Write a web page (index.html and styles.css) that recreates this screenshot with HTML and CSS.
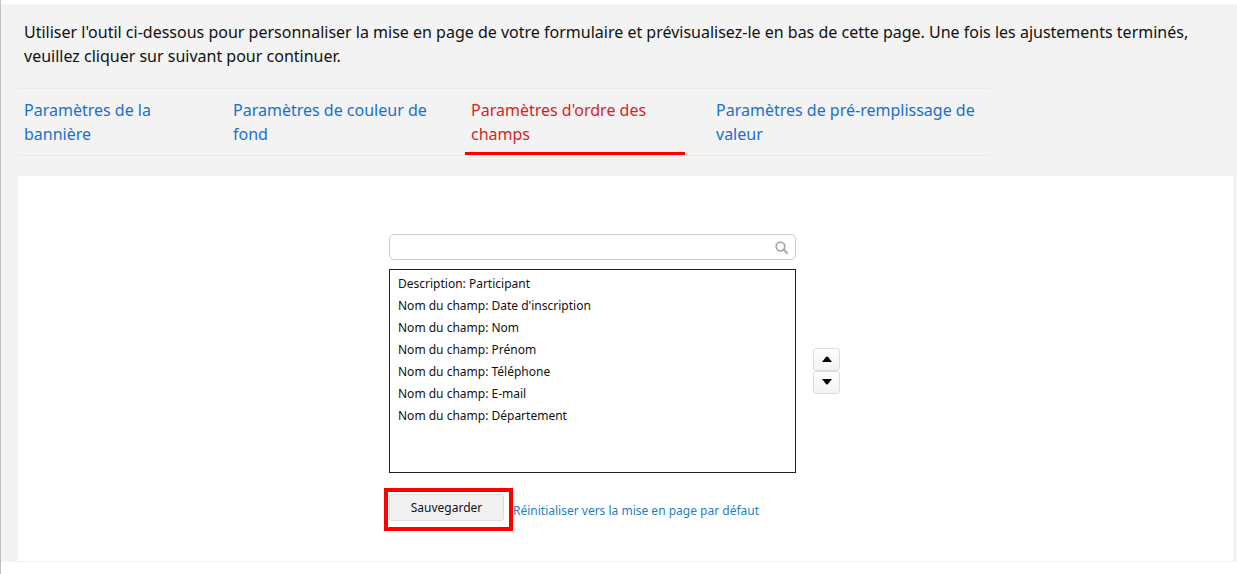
FILE: index.html
```html
<!DOCTYPE html>
<html lang="fr">
<head>
  <meta charset="UTF-8">
  <meta name="viewport" content="width=device-width, initial-scale=1.0">
  <title>Mise en page du formulaire</title>
  <link rel="stylesheet" href="styles.css">
</head>
<body>

  <main class="page">
    <p class="intro">Utiliser l'outil ci-dessous pour personnaliser la mise en page de votre formulaire et prévisualisez-le en bas de cette page. Une fois les ajustements terminés, veuillez cliquer sur suivant pour continuer.</p>

    <nav class="tabs">
      <a href="#banniere">Paramètres de la bannière</a>
      <a href="#couleur">Paramètres de couleur de fond</a>
      <a href="#ordre" class="active">Paramètres d'ordre des champs</a>
      <a href="#valeur">Paramètres de pré-remplissage de valeur</a>
    </nav>

    <section class="panel">
      <form class="editor">
        <div class="fields">
          <div class="search">
            <input type="text" aria-label="Rechercher un champ">
            <svg viewBox="0 0 14 14" width="14" height="14">
              <circle cx="5.5" cy="5.5" r="4.3" fill="none" stroke="#aaa" stroke-width="1.8"/>
              <path d="M8.8 8.8L12 12" stroke="#aaa" stroke-width="2.2" stroke-linecap="round"/>
            </svg>
          </div>
          <select class="list" size="9" aria-label="Ordre des champs">
            <option>Description: Participant</option>
            <option>Nom du champ: Date d'inscription</option>
            <option>Nom du champ: Nom</option>
            <option>Nom du champ: Prénom</option>
            <option>Nom du champ: Téléphone</option>
            <option>Nom du champ: E-mail</option>
            <option>Nom du champ: Département</option>
          </select>
        </div>

        <div class="arrows">
          <button type="button" aria-label="Monter">
            <svg viewBox="0 0 12 6" width="12" height="6"><path d="M1 6L5 1Q6 0 7 1L11 6Z"/></svg>
          </button>
          <button type="button" aria-label="Descendre">
            <svg viewBox="0 0 12 6" width="12" height="6"><path d="M1 0L5 5Q6 6 7 5L11 0Z"/></svg>
          </button>
        </div>

        <div class="actions">
          <div class="highlight"><button type="submit" class="save">Sauvegarder</button></div>
          <a href="#reset">Réinitialiser vers la mise en page par défaut</a>
        </div>
      </form>
    </section>
  </main>

</body>
</html>
```
FILE: styles.css
```css
* {
  box-sizing: border-box;
}
body {
  margin: 0;
  min-height: 100vh;
  padding-top: 4px;
  border-left: 1px solid #c0c0c0;
  background: #fff;
  color: #111;
  font-family: "Noto Sans", "Open Sans", sans-serif;
  font-size: 16px;
  line-height: 24px;
}
.page {
  background: #f3f3f3;
  padding: 16px 4px 1px 17px;
}
.intro {
  margin: 0 6px 20px;
}

/* onglets */
.tabs {
  display: grid;
  grid-template-columns: 184fr 213fr 220fr 280fr;
  column-gap: 25px;
  width: 80%;
  border-top: 1px solid #e8e8e8;
  border-bottom: 1px solid #e8e8e8;
}
.tabs a {
  padding: 9px 6px 6px;
  border-bottom: 3px solid transparent;
  color: #1a70cb;
  text-decoration: none;
}
.tabs .active {
  color: #d81f1f;
  border-bottom-color: #f00;
}

.panel {
  margin-top: 20px;
  padding: 58px 0 30px;
  background: #fff;
}
.editor {
  display: grid;
  grid-template-columns: 407px 49px;
  column-gap: 17px;
  justify-content: center;
  font-size: 12px;
}
.search {
  position: relative;
  margin-bottom: 9px;
}
.search input {
  display: block;
  width: 100%;
  height: 26px;
  padding: 0 28px 0 8px;
  border: 1px solid #ccc;
  border-radius: 5px;
  font: inherit;
}
.search svg {
  position: absolute;
  right: 7px;
  top: 7px;
}
.list {
  display: block;
  width: 100%;
  height: 204px;
  padding: 5px 0 0;
  border: 1px solid #222;
  border-radius: 0;
  background: #fff;
  color: #111;
  font: inherit;
  overflow: hidden;
}
.list option {
  min-height: 22px;
  padding: 0 8px;
  line-height: 22px;
}

.arrows {
  align-self: end;
  padding-bottom: 79px;
}
.arrows button {
  display: flex;
  align-items: center;
  justify-content: center;
  width: 27px;
  height: 23px;
  padding: 0 0 2px;
  border: 1px solid #ddd;
  border-radius: 3px;
  background: linear-gradient(#fff, #f2f2f2);
}

.actions {
  display: flex;
  align-items: center;
  grid-column: 1 / -1;
  margin: 15px 0 0 -5px;
}
.actions a {
  padding-top: 2px;
  color: #2380c9;
  text-decoration: none;
}
/* cadre rouge autour du bouton */
.highlight {
  padding: 2px 5px 6px 1px;
  border: 4px solid #f00;
}
.save {
  display: block;
  width: 115px;
  height: 27px;
  padding: 0;
  border: 1px solid #ddd;
  border-radius: 3px;
  background: #f1f1f1;
  color: #111;
  font: inherit;
}
```
